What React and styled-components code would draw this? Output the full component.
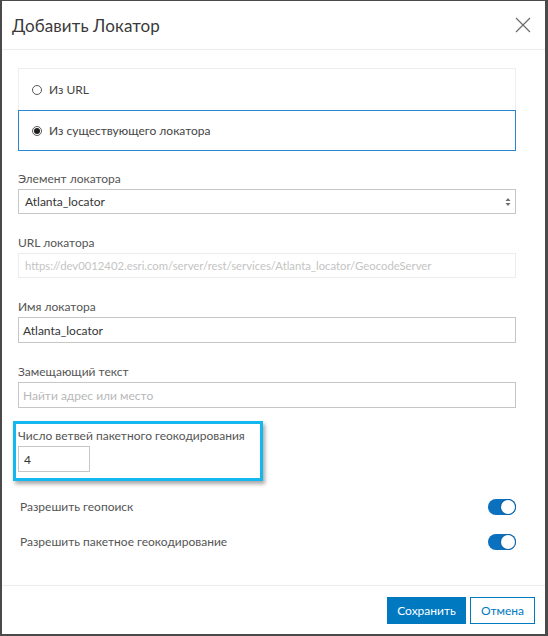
import React from "react";
import styled, { createGlobalStyle } from "styled-components";

const Global = createGlobalStyle`
  html, body { margin: 0; padding: 0; background: #fff; }
  body { font-family: "Lato", "Noto Sans", sans-serif; }
  * { box-sizing: border-box; }
`;

const Dialog = styled.div`
  width: 548px;
  height: 636px;
  background: #fff;
  border-style: solid;
  border-color: #4a4a4a;
  border-width: 1px 3px 2px 2px;
  display: flex;
  flex-direction: column;
  color: #4a4a4a;
`;

const Header = styled.header`
  height: 49px;
  flex: none;
  border-bottom: 1px solid #ececec;
  display: flex;
  align-items: center;
  justify-content: space-between;
  padding: 0 14px 0 10px;
`;

const Title = styled.h1`
  margin: 0;
  font-size: 17px;
  font-weight: 400;
  color: #3a3a3a;
  letter-spacing: 0.1px;
`;

const CloseButton = styled.button`
  border: 0;
  background: none;
  padding: 0;
  width: 16px;
  height: 16px;
  display: flex;
  color: #6b6b6b;
`;

const Body = styled.main`
  flex: 1;
  padding: 18px 29px 0 16px;
  display: flex;
  flex-direction: column;
`;

const RadioCard = styled.div`
  display: flex;
  flex-direction: column;
`;

const RadioRow = styled.label`
  height: ${(p) => (p.$selected ? "41px" : "42px")};
  display: flex;
  align-items: center;
  gap: 7px;
  padding-left: 13px;
  border: 1px solid ${(p) => (p.$selected ? "#2a86d0" : "#eeeeee")};
  border-bottom: ${(p) => (p.$selected ? "1px solid #2a86d0" : "0")};
  font-size: 12px;
  color: #444;
`;

const RadioDot = styled.span`
  width: 10px;
  height: 10px;
  border-radius: 50%;
  border: 1px solid #5a5a5a;
  display: flex;
  align-items: center;
  justify-content: center;
  &::after {
    content: "";
    width: 6px;
    height: 6px;
    border-radius: 50%;
    background: ${(p) => (p.$checked ? "#1e1e1e" : "transparent")};
  }
`;

const Field = styled.div`
  display: flex;
  flex-direction: column;
  margin-top: ${(p) => p.$mt || 20}px;
`;

const Label = styled.div`
  font-size: 12px;
  line-height: 18px;
  color: #555;
  margin-bottom: 1px;
  white-space: nowrap;
`;

const Input = styled.div`
  height: ${(p) => p.$h || 25}px;
  width: ${(p) => (p.$w ? `${p.$w}px` : "100%")};
  border: 1px solid ${(p) => (p.$disabled ? "#ececec" : "#c6c6c6")};
  display: flex;
  align-items: center;
  padding-left: ${(p) => p.$pl || 4}px;
  font-size: ${(p) => (p.$disabled ? "11.3px" : "12px")};
  color: ${(p) => (p.$muted ? "#b8b8b8" : p.$disabled ? "#c4c4c4" : "#353535")};
  white-space: nowrap;
  overflow: hidden;
  background: #fff;
`;

const SelectBox = styled(Input)`
  justify-content: space-between;
  padding-right: 4px;
`;

const Highlight = styled.div`
  margin: 13px 0 0 -5px;
  width: 250px;
  border: 3px solid #14b8ee;
  padding: 3px 2px 6px 2px;
  box-shadow: 2px 3px 4px rgba(0, 0, 0, 0.35);
  display: flex;
  flex-direction: column;
  align-items: flex-start;
`;

const ToggleList = styled.div`
  margin-top: 8px;
  display: flex;
  flex-direction: column;
`;

const ToggleRow = styled.div`
  height: 35px;
  display: flex;
  align-items: center;
  justify-content: space-between;
  font-size: 12px;
  color: #555;
  padding-left: 2px;
`;

const Switch = styled.span`
  width: 28px;
  height: 16px;
  border-radius: 8px;
  background: #0b70bd;
  display: flex;
  align-items: center;
  justify-content: flex-end;
  padding-right: 1px;
  &::after {
    content: "";
    width: 14px;
    height: 14px;
    border-radius: 50%;
    background: #fff;
    box-shadow: 0 0 0 1px #0a64aa;
  }
`;

const Footer = styled.footer`
  height: 49px;
  flex: none;
  border-top: 1px solid #ececec;
  display: flex;
  justify-content: flex-end;
  align-items: flex-start;
  gap: 4px;
  padding: 11px 10px 0 0;
`;

const Button = styled.button`
  height: 27px;
  padding: 0;
  width: ${(p) => (p.$primary ? "79px" : "65px")};
  font-family: inherit;
  font-size: 12px;
  border: 1px solid #0079c1;
  background: ${(p) => (p.$primary ? "#0079c1" : "#fff")};
  color: ${(p) => (p.$primary ? "#fff" : "#0079c1")};
  cursor: pointer;
`;

const Arrows = () => (
  <svg width="6" height="10" viewBox="0 0 6 10">
    <path d="M3 1 L5.5 4 H0.5 Z" fill="#6e6e6e" />
    <path d="M3 9 L5.5 6 H0.5 Z" fill="#6e6e6e" />
  </svg>
);

const CloseIcon = () => (
  <svg width="16" height="16" viewBox="0 0 16 16">
    <path d="M1 1 L15 15 M15 1 L1 15" stroke="currentColor" strokeWidth="1.2" fill="none" />
  </svg>
);

export default function App() {
  return (
    <>
      <Global />
      <Dialog>
        <Header>
          <Title>Добавить Локатор</Title>
          <CloseButton aria-label="Закрыть">
            <CloseIcon />
          </CloseButton>
        </Header>
        <Body>
          <RadioCard>
            <RadioRow>
              <RadioDot />
              Из URL
            </RadioRow>
            <RadioRow $selected>
              <RadioDot $checked />
              Из существующего локатора
            </RadioRow>
          </RadioCard>

          <Field $mt={19}>
            <Label>Элемент локатора</Label>
            <SelectBox $pl={6}>
              Atlanta_locator
              <Arrows />
            </SelectBox>
          </Field>

          <Field>
            <Label>URL локатора</Label>
            <Input $disabled $pl={6}>
              https://dev0012402.esri.com/server/rest/services/Atlanta_locator/GeocodeServer
            </Input>
          </Field>

          <Field>
            <Label>Имя локатора</Label>
            <Input $h={26}>Atlanta_locator</Input>
          </Field>

          <Field>
            <Label>Замещающий текст</Label>
            <Input $h={26} $muted>
              Найти адрес или место
            </Input>
          </Field>

          <Highlight>
            <Label>Число ветвей пакетного геокодирования</Label>
            <Input $h={26} $w={72} $pl={5}>
              4
            </Input>
          </Highlight>

          <ToggleList>
            <ToggleRow>
              Разрешить геопоиск
              <Switch />
            </ToggleRow>
            <ToggleRow>
              Разрешить пакетное геокодирование
              <Switch />
            </ToggleRow>
          </ToggleList>
        </Body>
        <Footer>
          <Button $primary>Сохранить</Button>
          <Button>Отмена</Button>
        </Footer>
      </Dialog>
    </>
  );
}
